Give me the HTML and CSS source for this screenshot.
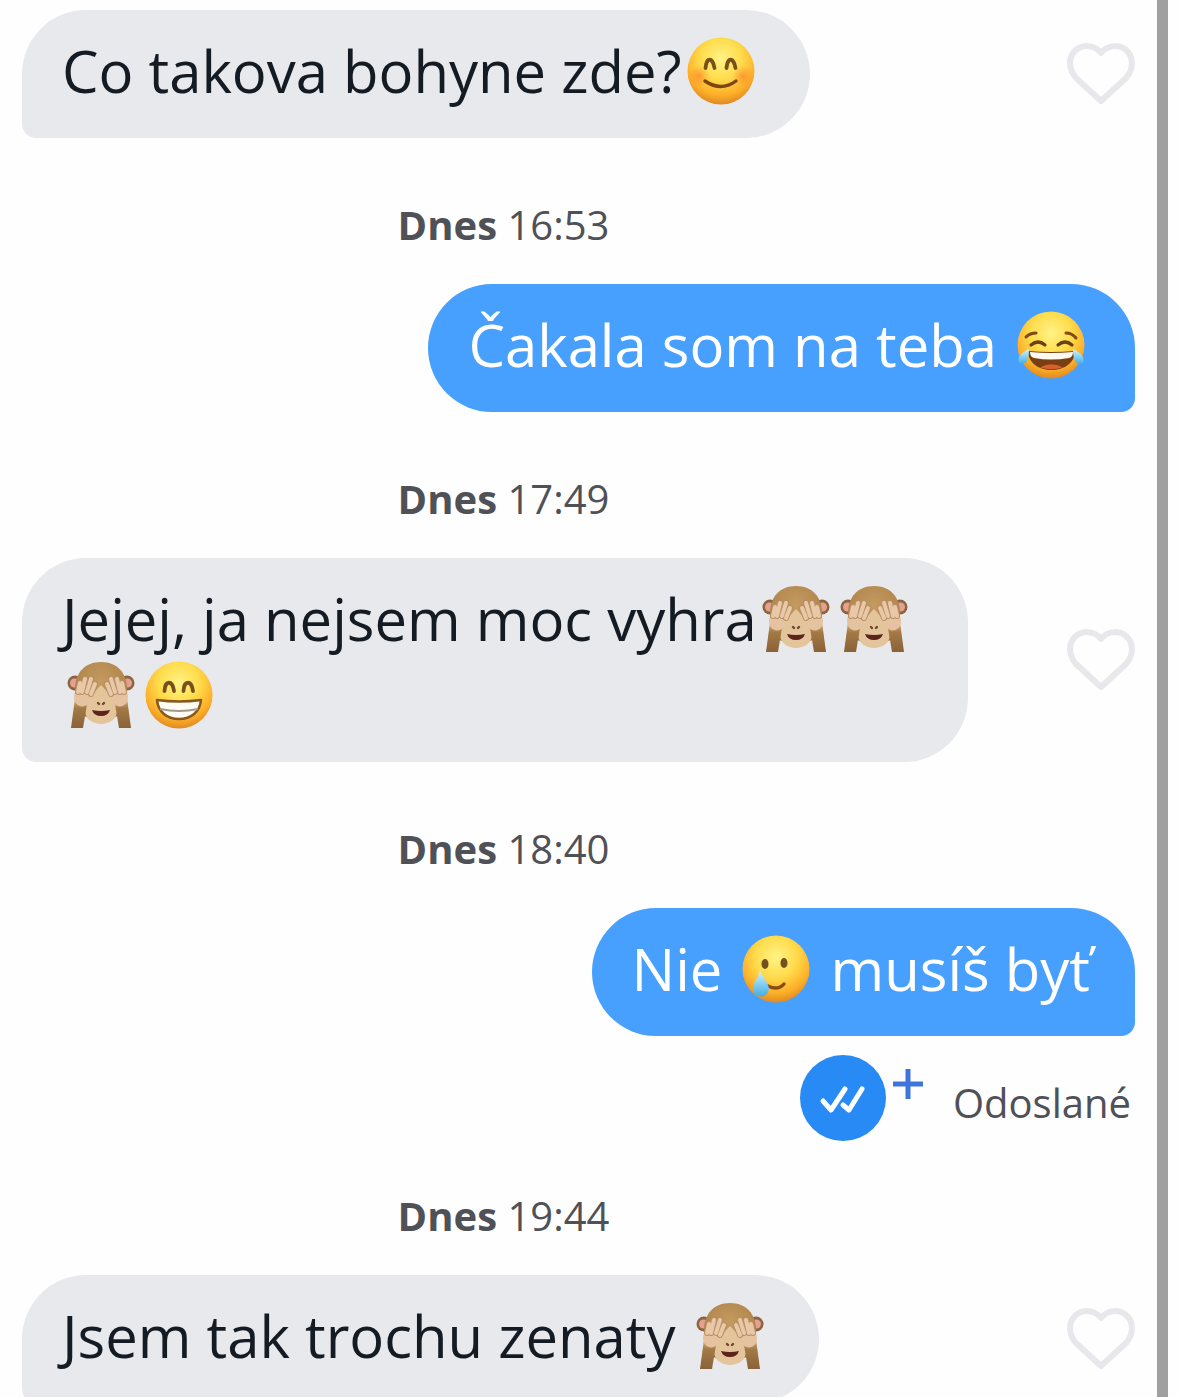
FILE: index.html
```html
<!DOCTYPE html>
<html lang="sk">
<head>
    <meta charset="UTF-8">
    <meta name="viewport" content="width=device-width, initial-scale=1.0">
    <title>Chat</title>
    <link rel="stylesheet" href="styles.css">
</head>
<body>
    <svg class="sprites" aria-hidden="true">
        <defs>
            <radialGradient id="yellow" cx="50%" cy="32%" r="68%">
                <stop offset="0" stop-color="#fff387"/>
                <stop offset="0.45" stop-color="#ffdc4c"/>
                <stop offset="0.8" stop-color="#fcae28"/>
                <stop offset="1" stop-color="#e08a22"/>
            </radialGradient>
            <radialGradient id="cheek">
                <stop offset="0" stop-color="#fb6a29" stop-opacity="0.5"/>
                <stop offset="1" stop-color="#fb7a29" stop-opacity="0"/>
            </radialGradient>
            <radialGradient id="fur" cx="50%" cy="35%" r="65%">
                <stop offset="0" stop-color="#c39a60"/>
                <stop offset="0.7" stop-color="#b3884f"/>
                <stop offset="1" stop-color="#94693c"/>
            </radialGradient>
            <linearGradient id="arm" x1="0" y1="0" x2="0" y2="1">
                <stop offset="0" stop-color="#dcb48a"/>
                <stop offset="0.35" stop-color="#a37945"/>
                <stop offset="1" stop-color="#8a6238"/>
            </linearGradient>
            <linearGradient id="tear" x1="0" y1="0" x2="0" y2="1">
                <stop offset="0" stop-color="#d4f5ff"/>
                <stop offset="1" stop-color="#41aee4"/>
            </linearGradient>

            <symbol id="blush" viewBox="0 0 68 68">
                <circle cx="34" cy="34" r="33.500" fill="url(#yellow)"/>
                <circle cx="12" cy="39" r="11" fill="url(#cheek)"/>
                <circle cx="56" cy="39" r="11" fill="url(#cheek)"/>
                <path d="M18.500 31C19.500 20 25.500 20 27.500 31M39.500 31C40.500 20 46.500 20 48.500 31" fill="none" stroke="#77501a" stroke-width="3.800" stroke-linecap="round"/>
                <path d="M18 44Q34 55 49 44" fill="none" stroke="#7d4612" stroke-width="3.400" stroke-linecap="round"/>
            </symbol>

            <symbol id="joy" viewBox="0 0 68 68">
                <circle cx="34" cy="34" r="33.500" fill="url(#yellow)"/>
                <path d="M9 26Q13 22 19 22M49 22Q55 22 59 27" fill="none" stroke="#7d4b13" stroke-width="3" stroke-linecap="round"/>
                <path d="M14 34Q21 28 28 34M41 34Q48 28 55 34" fill="none" stroke="#6c4012" stroke-width="3.200" stroke-linecap="round"/>
                <path d="M11 40Q34 42 58 40C58 52 47 59 34.500 59C22 59 11 52 11 40Z" fill="#7a3e13"/>
                <path d="M13 41Q34 43 56 41Q56 46 52 47Q34 50 17 47Q13 46 13 41Z" fill="#fffaf0"/>
                <path d="M23 56.500Q34 50 46 56.500Q34 60 23 56.500Z" fill="#d9602a"/>
                <path d="M12 38C12 48 10 53 4 53C-1 51 1 43 12 38ZM56 38C56 48 58 53 64 53C69 51 67 43 56 38Z" fill="url(#tear)"/>
            </symbol>

            <symbol id="grin" viewBox="0 0 68 68">
                <circle cx="34" cy="34" r="33.500" fill="url(#yellow)"/>
                <path d="M19.500 30C20 19 27.500 19 29 30M38.500 30C39 19 46.500 19 48 30" fill="none" stroke="#77501a" stroke-width="3.800" stroke-linecap="round"/>
                <path d="M12 39Q34 42 56 39C55 51 46 58 34 58C22 58 13 51 12 39Z" fill="#fffdf4" stroke="#88581c" stroke-width="2.600" stroke-linejoin="round"/>
                <path d="M15 48Q34 52 53 48" fill="none" stroke="#a49a8b" stroke-width="2"/>
            </symbol>

            <symbol id="sad" viewBox="0 0 68 68">
                <circle cx="34" cy="34" r="33.500" fill="url(#yellow)"/>
                <ellipse cx="23" cy="29" rx="3.500" ry="5" fill="#75501d"/>
                <ellipse cx="42" cy="28" rx="3.500" ry="5" fill="#75501d"/>
                <path d="M26 51Q36 56 42 49" fill="none" stroke="#8a4a16" stroke-width="3.400" stroke-linecap="round"/>
                <path d="M18 35C20 42 27 48 27 54C26 60 22 61.500 19 61.500C14 61.500 11 58 11 53C11 48 17 42 18 35Z" fill="url(#tear)"/>
            </symbol>

            <symbol id="monkey" viewBox="0 0 68 68">
                <circle cx="8" cy="22" r="7.500" fill="#8b6440"/>
                <circle cx="60" cy="22" r="7.500" fill="#8b6440"/>
                <circle cx="7.500" cy="22" r="4.500" fill="#e6a090"/>
                <circle cx="60.500" cy="22" r="4.500" fill="#e6a090"/>
                <path d="M34 1C50 1 60 12 60 28C60 41 56 49 49 56H19C12 49 8 41 8 28C8 12 18 1 34 1Z" fill="url(#fur)"/>
                <path d="M34 24C41 31 50 43 50 50C50 58 42 63 34 63C26 63 18 58 18 50C18 43 27 31 34 24Z" fill="#e3c49b"/>
                <path d="M31 42L32 43M37 42L36 43" stroke="#70462f" stroke-width="2.400" stroke-linecap="round"/>
                <path d="M25 49Q34 51 43 49Q41 55 34 55Q27 55 25 49Z" fill="#5c241d"/>
                <g id="paw">
                    <path d="M8 37L4 67H16L20 43Z" fill="url(#arm)"/>
                    <path d="M8 41C5 33 9 28 14 24L26 24C28 30 26 37 21 43C17 47 11 46 8 41Z" fill="#e6c3a0"/>
                    <path d="M11 31L13 22M15 31L18 18M20 31L24 18M24 33L28 23" stroke="#b98f65" stroke-width="6" stroke-linecap="round"/>
                    <path d="M11 31L13 22M15 31L18 18M20 31L24 18M24 33L28 23" stroke="#e9c8a7" stroke-width="4" stroke-linecap="round"/>
                </g>
                <use href="#paw" transform="matrix(-1 0 0 1 68 0)"/>
            </symbol>

            <symbol id="heart" viewBox="0 0 68 62">
                <path d="M34 10C27 1 14 1 7 9C1 16 2 27 9 35L34 58L59 35C66 27 67 16 61 9C54 1 41 1 34 10Z" fill="none" stroke="currentColor" stroke-width="6" stroke-linejoin="round"/>
            </symbol>
        </defs>
    </svg>

    <main class="thread">
        <div class="row">
            <div class="bubble received">Co takova bohyne zde?<svg class="emoji" role="img" aria-label="😊"><use href="#blush"/></svg></div>
            <button class="like" aria-label="Like"><svg><use href="#heart"/></svg></button>
        </div>

        <div class="date"><strong>Dnes</strong> 16:53</div>

        <div class="row own">
            <div class="bubble sent">Čakala som na teba <svg class="emoji" role="img" aria-label="😂"><use href="#joy"/></svg></div>
        </div>

        <div class="date"><strong>Dnes</strong> 17:49</div>

        <div class="row">
            <div class="bubble received">Jejej, ja nejsem moc vyhra<svg class="emoji" role="img" aria-label="🙈"><use href="#monkey"/></svg><svg class="emoji" role="img" aria-label="🙈"><use href="#monkey"/></svg><svg class="emoji" role="img" aria-label="🙈"><use href="#monkey"/></svg><svg class="emoji" role="img" aria-label="😁"><use href="#grin"/></svg></div>
            <button class="like" aria-label="Like"><svg><use href="#heart"/></svg></button>
        </div>

        <div class="date"><strong>Dnes</strong> 18:40</div>

        <div class="row own">
            <div class="bubble sent">Nie <svg class="emoji" role="img" aria-label="🥲"><use href="#sad"/></svg> musíš byť</div>
        </div>

        <div class="receipt">
            <svg class="checks" viewBox="0 0 86 86">
                <circle cx="43" cy="43" r="43" fill="#278af5"/>
                <path d="M23 46L31 55L45 34M43 50L49 55L62 34" fill="none" stroke="#fff" stroke-width="5" stroke-linecap="round" stroke-linejoin="round"/>
            </svg>
            <svg class="plus" viewBox="0 0 30 30">
                <path d="M15 0V30M0 15H30" stroke="#3e74dc" stroke-width="5"/>
            </svg>
            <span class="status">Odoslané</span>
        </div>

        <div class="date"><strong>Dnes</strong> 19:44</div>

        <div class="row">
            <div class="bubble received">Jsem tak trochu zenaty <svg class="emoji" role="img" aria-label="🙈"><use href="#monkey"/></svg></div>
            <button class="like" aria-label="Like"><svg><use href="#heart"/></svg></button>
        </div>
    </main>
</body>
</html>
```
FILE: styles.css
```css
* {
    box-sizing: border-box;
}

body {
    margin: 0;
    height: 100vh;
    overflow: hidden;
    background-color: #fefefe;
    font-family: "Open Sans", "Noto Sans", sans-serif;
    color: #505157;
}

.sprites {
    position: absolute;
    width: 0;
    height: 0;
}

.thread {
    min-height: 100vh;
    margin-right: 11px;
    padding: 10px 22px;
    border-right: 11px solid #a0a0a0;
}

.row {
    display: flex;
    justify-content: space-between;
    align-items: center;
    margin-bottom: 12px;
}

.own {
    justify-content: flex-end;
}

.bubble {
    max-width: 85%;
    padding: 23px 50px 29px 40px;
    border-radius: 64px;
    font-size: 58px;
    line-height: 76px;
}

.received {
    background-color: #e7e9ed;
    color: #151b23;
    border-bottom-left-radius: 14px;
}

.sent {
    padding-right: 45px;
    background-color: #479ffe;
    color: #fff;
    border-bottom-right-radius: 14px;
}

.emoji {
    width: 68px;
    height: 68px;
    margin: 0 5px;
    vertical-align: -12px;
}

.like {
    flex: none;
    padding: 0;
    border: none;
    background: transparent;
    color: #e7e7ec;
    cursor: pointer;
}

.like svg {
    display: block;
    width: 68px;
    height: 62px;
}

.date {
    padding: 47px 150px 31px 0;
    font-size: 40px;
    line-height: 56px;
    text-align: center;
}

.receipt {
    display: flex;
    justify-content: flex-end;
    align-items: center;
    margin-top: 19px;
    padding-right: 4px;
    font-size: 40px;
    line-height: 56px;
}

.checks {
    width: 86px;
    height: 86px;
}

.plus {
    align-self: flex-start;
    width: 30px;
    height: 30px;
    margin: 14px 30px 0 7px;
}

.status {
    padding-top: 10px;
}
```
